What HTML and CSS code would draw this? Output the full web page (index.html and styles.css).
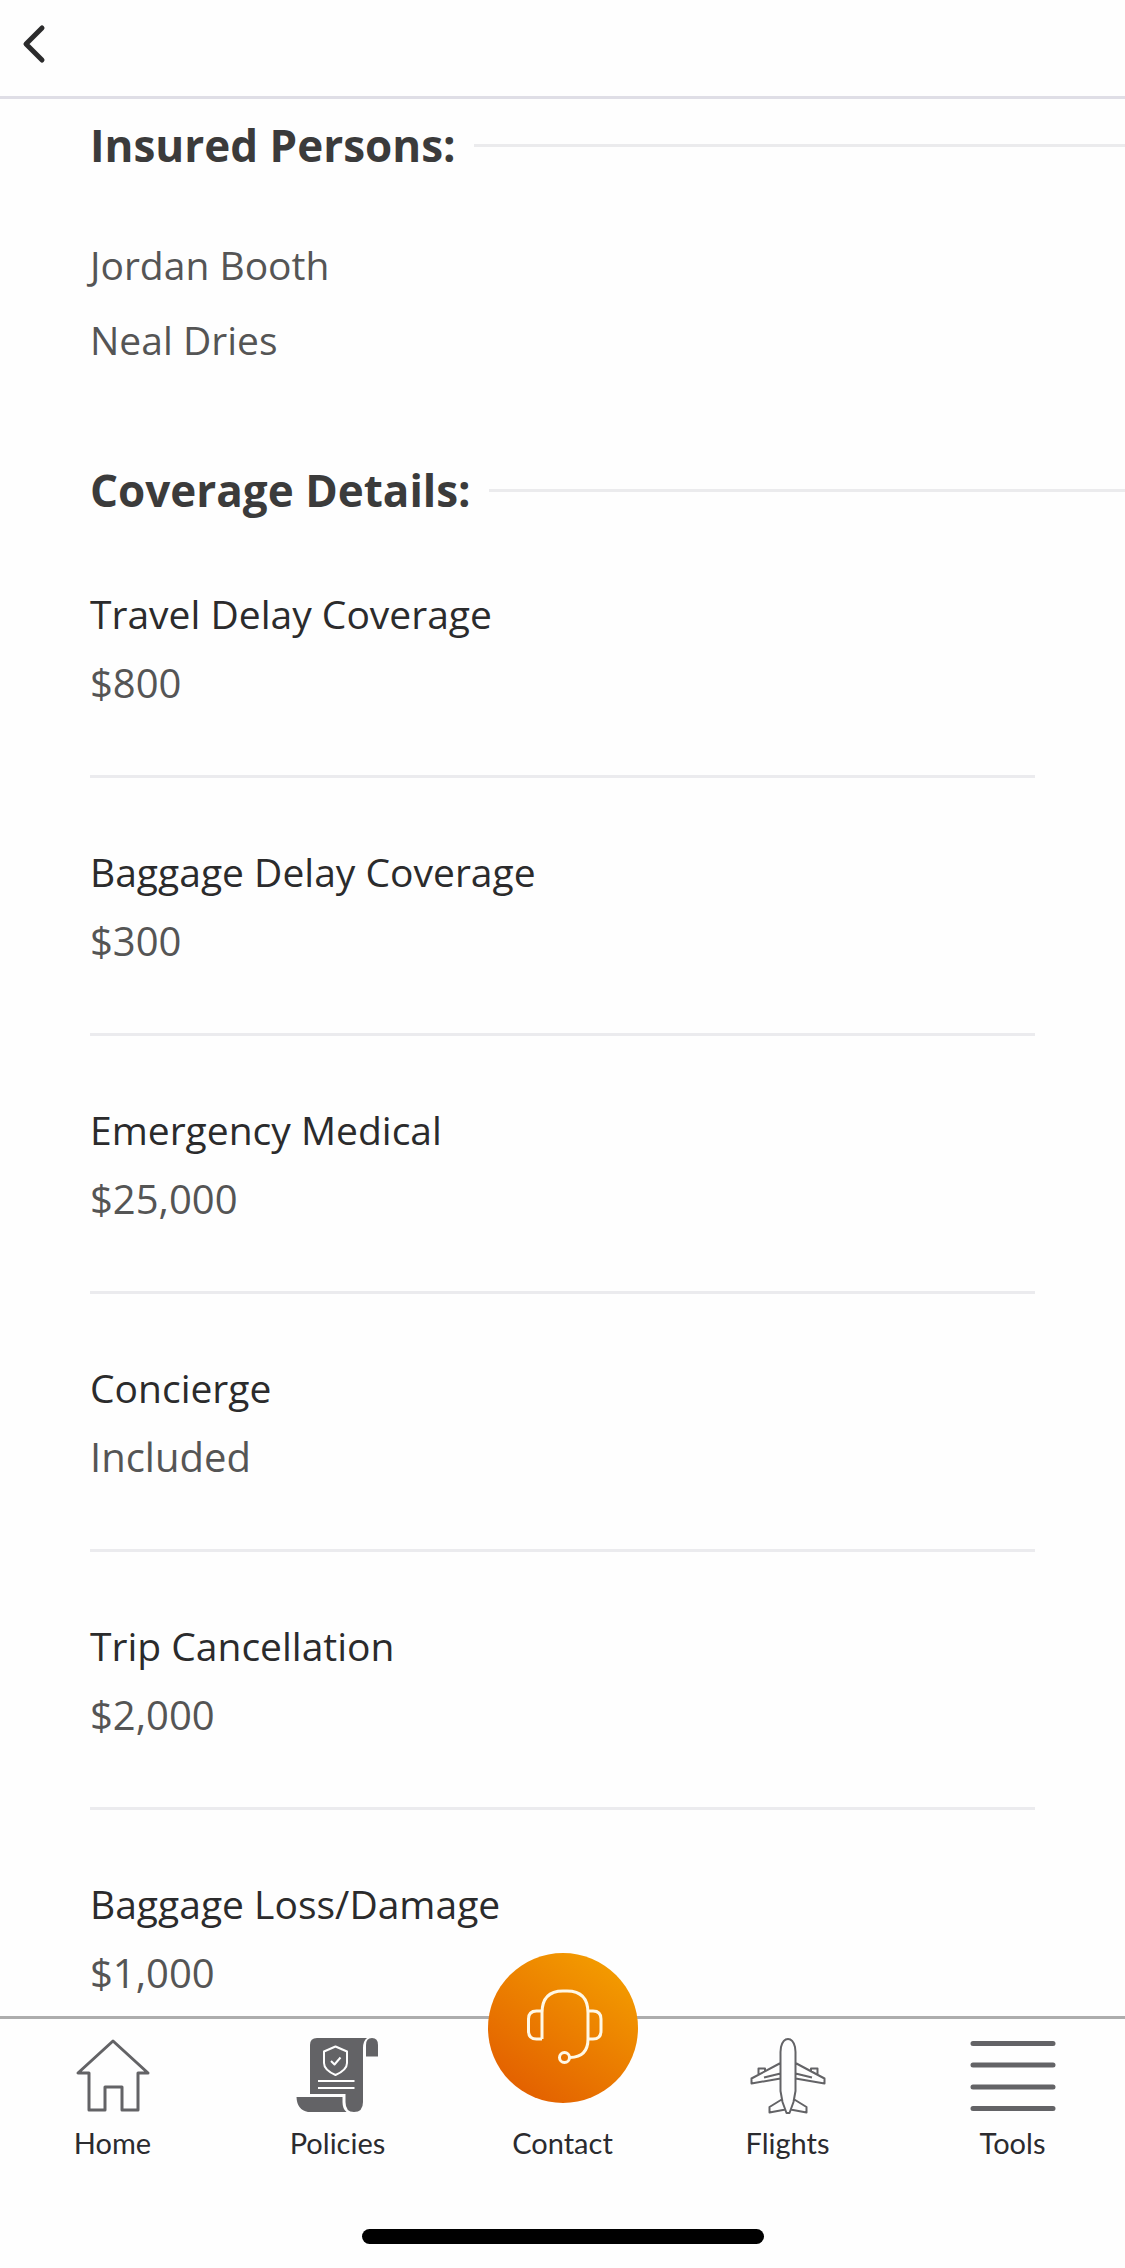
FILE: index.html
```html
<!DOCTYPE html>
<html lang="en">
<head>
<meta charset="utf-8">
<meta name="viewport" content="width=device-width, initial-scale=1">
<title>Policy details</title>
<link rel="stylesheet" href="styles.css">
</head>
<body>
<div class="app">
  <header class="topbar">
    <button class="back" type="button" aria-label="Back">
      <svg width="24" height="40" viewBox="0 0 24 40" aria-hidden="true"><path d="M20 4 4 20l16 16"/></svg>
    </button>
  </header>

  <main class="content">
    <section class="section">
      <h2 class="section-title">Insured Persons:</h2>
      <ul class="persons">
        <li>Jordan Booth</li>
        <li>Neal Dries</li>
      </ul>
    </section>
    <section class="section">
      <h2 class="section-title">Coverage Details:</h2>
      <dl class="coverage">
        <div class="coverage-item"><dt>Travel Delay Coverage</dt><dd>$800</dd></div>
        <div class="coverage-item"><dt>Baggage Delay Coverage</dt><dd>$300</dd></div>
        <div class="coverage-item"><dt>Emergency Medical</dt><dd>$25,000</dd></div>
        <div class="coverage-item"><dt>Concierge</dt><dd>Included</dd></div>
        <div class="coverage-item"><dt>Trip Cancellation</dt><dd>$2,000</dd></div>
        <div class="coverage-item"><dt>Baggage Loss/Damage</dt><dd>$1,000</dd></div>
      </dl>
    </section>
  </main>

  <footer class="bottom">
    <nav class="tabs">
      <a class="tab" href="#home">
        <svg class="tab-icon" viewBox="0 0 90 80" aria-hidden="true"><path stroke-width="3" d="M45 5 10 37h11v37h16V51h17v23h16V37h10z"/></svg>
        <span>Home</span>
      </a>
      <a class="tab" href="#policies">
        <svg class="tab-icon" viewBox="0 0 90 80" aria-hidden="true">
          <g class="solid">
            <path d="M17 58V9q0-7 7-7h50q-4 3-4 10v54q0 10-9 10-8.500 0-8.500-10v-8z"/>
            <path d="M3.500 61h46v5q0 7 4 10H15Q4 74 3.500 61z"/>
            <path d="M73 20.500V9q0-7 6-7t6 7v11.500z"/>
          </g>
          <g class="cutout"><path d="m42.500 10.500 11.500 5V27q0 7-11.500 12Q31 34 31 27V15.500z"/><path d="m38 25 3.500 3.500 6-7M25 45h36.500M25 52h36.500"/></g>
        </svg>
        <span>Policies</span>
      </a>
      <a class="tab" href="#contact">
        <svg class="tab-icon contact-icon" viewBox="0 0 150 150" aria-hidden="true">
          <path d="M54 86V60q0-22 21-22h4q21 0 21 22v26q0 18-18 18.500M54 58h-5.500q-8 0-8 8v12q0 8 8 8H54M100 58h5q8 0 8 8v12q0 8-8 8h-5"/><circle cx="76.500" cy="104.500" r="5"/>
        </svg>
        <span>Contact</span>
      </a>
      <a class="tab" href="#flights">
        <svg class="tab-icon" viewBox="0 0 90 80" aria-hidden="true">
          <path stroke-width="2" d="M45 3q-5 0-7 8l-.5 5v39l2 11 4 11h3l4-11 2-11V16l-.5-5q-2-8-7-8zM37.500 27 8.500 42.500v5l29-5M52.500 27l29 15.500v5l-29-5M21 41.500l16.500-4M69 41.500l-16.500-4M15.500 38v-5.500H22V35M74.500 38v-5.500H68V35M39.500 63l-13 8v5.500l16-3M50.500 63l13 8v5.500l-16-3"/>
        </svg>
        <span>Flights</span>
      </a>
      <a class="tab" href="#tools">
        <svg class="tab-icon" viewBox="0 0 90 80" aria-hidden="true"><path stroke-width="5" stroke-linecap="round" d="M5 7.500h80M5 29h80M5 51h80M5 72.500h80"/></svg>
        <span>Tools</span>
      </a>
    </nav>
    <div class="home-indicator"></div>
  </footer>
</div>
</body>
</html>
```
FILE: styles.css
```css
* {
  box-sizing: border-box;
  margin: 0;
  padding: 0;
}

body {
  background: #fefefe;
  color: #2b2b2c;
  font-family: "Open Sans", "Noto Sans", sans-serif;
}

.app {
  display: flex;
  flex-direction: column;
  height: 100vh;
}

.topbar {
  flex: none;
  padding: 24px 22px 32px;
  border-bottom: 3px solid #dfdee6;
}

.back {
  display: block;
  border: 0;
  background: none;
  cursor: pointer;
}

.back svg {
  display: block;
  fill: none;
  stroke: #2b2b2c;
  stroke-width: 5;
  stroke-linecap: round;
  stroke-linejoin: round;
}

.content {
  flex: 1;
  min-height: 0;
  padding-top: 16px;
  overflow-y: auto;
  scrollbar-width: none;
}

.section {
  padding-left: 90px;
}

.section + .section {
  margin-top: 83px;
}

.section-title {
  display: flex;
  align-items: center;
  gap: 18px;
  color: #3b3b3b;
  font-size: 44px;
  font-weight: 700;
  line-height: 60px;
}

.section-title::after {
  flex: 1;
  height: 3px;
  background: #ebebed;
  content: "";
}

.persons {
  margin-top: 52px;
  color: #555;
  font-size: 39px;
  line-height: 75px;
  list-style: none;
}

.coverage {
  margin-right: 90px;
  font-size: 39px;
  line-height: 69px;
}

.coverage-item {
  padding: 59px 0 58px;
  border-bottom: 3px solid #ebebee;
}

.coverage dd {
  color: #555;
  font-size: 40px;
}

.bottom {
  position: relative;
  flex: none;
  padding: 17px 0 24px;
  border-top: 3px solid #adadad;
  background: #fefefe;
}

.tabs {
  display: grid;
  grid-template-columns: repeat(5, 1fr);
}

.tab {
  position: relative;
  display: flex;
  flex-direction: column;
  align-items: center;
  justify-content: flex-end;
  gap: 9px;
  color: #2b2b2f;
  font-family: Lato, sans-serif;
  font-size: 29px;
  line-height: 36px;
  text-decoration: none;
}

.tab-icon {
  width: 90px;
  height: 80px;
  fill: none;
  stroke: #636366;
  stroke-linejoin: round;
}

.tab-icon .solid {
  fill: #636366;
  stroke: none;
}

.tab-icon .cutout {
  stroke: #fefefe;
  stroke-width: 2;
}

.contact-icon {
  position: absolute;
  top: -83px;
  width: 150px;
  height: 150px;
  border-radius: 50%;
  background: linear-gradient(35deg, #e36000 12%, #f39b00 88%);
  stroke: #fff8e6;
  stroke-width: 3;
}

.home-indicator {
  width: 402px;
  max-width: 60%;
  height: 15px;
  margin: 68px auto 0;
  border-radius: 8px;
  background: #000;
}
```
